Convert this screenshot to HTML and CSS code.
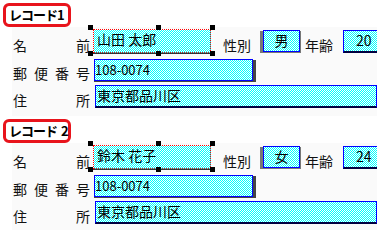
FILE: index.html
```html
<!DOCTYPE html>
<html lang="ja">
<head>
<meta charset="utf-8">
<link rel="stylesheet" href="styles.css">
</head>
<body>
<div class="page">
  <section class="record">
    <div class="title">レコード1</div>
    <div class="form">
      <div class="row r-name">
        <div class="label"><span>名</span><span>前</span></div>
        <div class="field name">山田 太郎<i class="h tl"></i><i class="h tm"></i><i class="h tr"></i><i class="h bl"></i><i class="h bm"></i><i class="h br"></i></div>
        <div class="lbl2 sex-l">性別</div>
        <div class="field sex">男</div>
        <div class="lbl2 age-l">年齢</div>
        <div class="field age">20</div>
      </div>
      <div class="row r-zip">
        <div class="label"><span>郵</span><span>便</span><span>番</span><span>号</span></div>
        <div class="field zip">108-0074</div>
      </div>
      <div class="row r-addr">
        <div class="label"><span>住</span><span>所</span></div>
        <div class="field addr">東京都品川区</div>
      </div>
    </div>
  </section>
  <section class="record">
    <div class="title">レコード<span class="gap"></span>2</div>
    <div class="form">
      <div class="row r-name">
        <div class="label"><span>名</span><span>前</span></div>
        <div class="field name">鈴木 花子<i class="h tl"></i><i class="h tm"></i><i class="h tr"></i><i class="h bl"></i><i class="h bm"></i><i class="h br"></i></div>
        <div class="lbl2 sex-l">性別</div>
        <div class="field sex">女</div>
        <div class="lbl2 age-l">年齢</div>
        <div class="field age">24</div>
      </div>
      <div class="row r-zip">
        <div class="label"><span>郵</span><span>便</span><span>番</span><span>号</span></div>
        <div class="field zip">108-0074</div>
      </div>
      <div class="row r-addr">
        <div class="label"><span>住</span><span>所</span></div>
        <div class="field addr">東京都品川区</div>
      </div>
    </div>
  </section>
</div>
</body>
</html>
```
FILE: styles.css
```css
html, body {
  margin: 0;
  padding: 0;
  background: #fff;
}
body {
  font-family: "Noto Sans CJK JP", "DejaVu Sans", sans-serif;
  color: #000;
}
.page {
  width: 377px;
  height: 230px;
  overflow: hidden;
}
.record {
  height: 116px;
  overflow: hidden;
}
.title {
  margin: 3px 0 0 3px;
  width: 68px;
  height: 24px;
  box-sizing: border-box;
  border: 3px solid #e8141c;
  border-radius: 6px;
  padding-left: 3px;
  font-size: 13px;
  font-weight: bold;
  letter-spacing: -1px;
  line-height: 18px;
  white-space: nowrap;
}
.gap {
  display: inline-block;
  width: 4px;
}
.form {
  margin-left: 12px;
  padding-top: 2px;
  height: 87px;
  background: #fafafa;
}
.row {
  display: flex;
  align-items: flex-end;
}
.r-name { height: 24px; }
.r-zip { height: 22px; margin-top: 6px; }
.r-addr { height: 23px; margin-top: 4px; }
.label {
  width: 77px;
  margin-left: 1px;
  display: flex;
  justify-content: space-between;
  font-size: 14px;
  line-height: 16px;
  color: #111;
  flex: none;
}
.lbl2 {
  font-size: 14px;
  line-height: 16px;
  color: #111;
  flex: none;
  white-space: nowrap;
}
.sex-l { margin-left: 12px; }
.age-l { margin-left: 5px; width: 30px; }
.field {
  box-sizing: border-box;
  border: 1px solid #0000ff;
  background: repeating-conic-gradient(#00ffff 0 25%, #ffffff 0 50%) 0 0 / 2px 2px;
  font-size: 14px;
  line-height: 20px;
  white-space: nowrap;
  flex: none;
}
.name {
  position: relative;
  margin-left: 3px;
  width: 118px;
  height: 24px;
  border: 1px dotted #ff0000;
  padding-left: 3px;
  line-height: 19px;
  box-shadow: 0 1px 0 #333;
}
.h {
  position: absolute;
  width: 5px;
  height: 5px;
  background: #000;
}
.tl { left: -6px; top: -5px; }
.tm { left: 62px; top: -5px; }
.tr { right: -5px; top: -5px; }
.bl { left: -6px; bottom: -4px; }
.bm { left: 62px; bottom: -4px; }
.br { right: -5px; bottom: -4px; }
.sex {
  align-self: flex-start;
  margin-top: 1px;
  margin-left: 12px;
  width: 37px;
  height: 22px;
  text-align: center;
  line-height: 18px;
  box-shadow: -3px 1px 0 #777, 1px 1px 0 #777;
}
.age {
  align-self: flex-start;
  margin-top: 1px;
  margin-left: 8px;
  width: 60px;
  height: 23px;
  padding-left: 12px;
  line-height: 19px;
  border-bottom: 2px solid #000040;
}
.zip {
  margin-left: 4px;
  width: 159px;
  height: 22px;
  font-size: 13px;
  line-height: 20px;
  box-shadow: 0 1px 0 #444, 3px 1px 0 #444;
}
.addr {
  margin-left: 5px;
  flex: 1 0 auto;
  height: 23px;
  padding-left: 1px;
  line-height: 18px;
  border-bottom: 2px solid #000040;
}
```
